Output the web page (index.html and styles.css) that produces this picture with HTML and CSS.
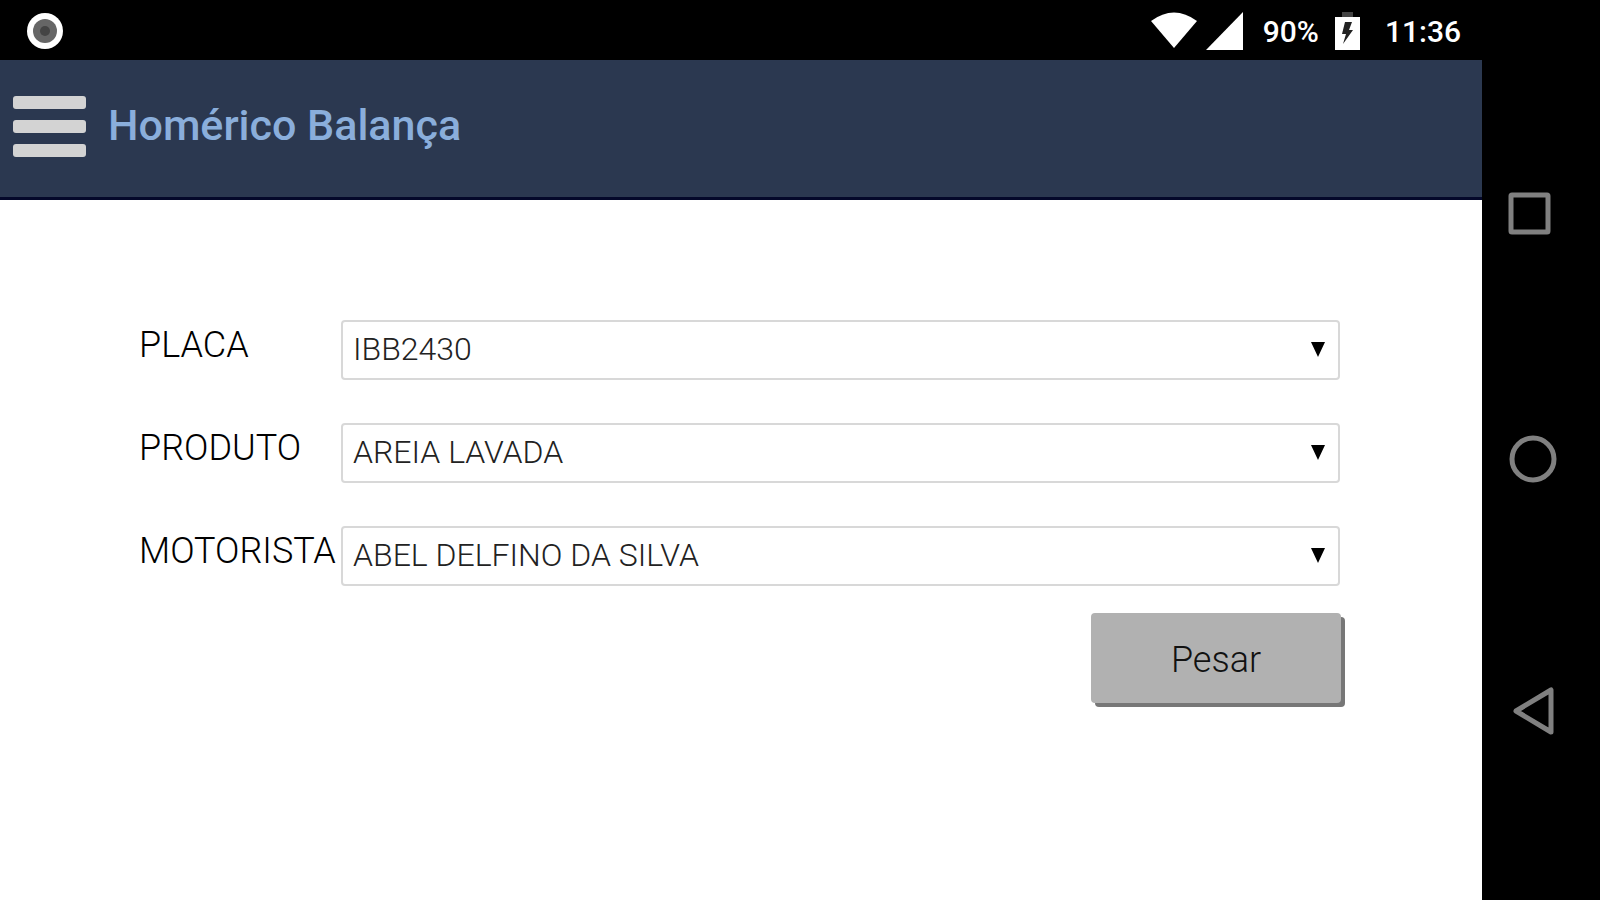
FILE: index.html
```html
<!DOCTYPE html>
<html lang="pt-BR">
<head>
<meta charset="utf-8">
<meta name="viewport" content="width=device-width, initial-scale=1">
<title>Homérico Balança</title>
<link rel="stylesheet" href="styles.css">
</head>
<body>
<div class="screen">
  <div class="status-bar">
    <svg class="record" width="38" height="38" viewBox="0 0 38 38" aria-hidden="true">
      <circle cx="19" cy="19" r="18" fill="#fff"/>
      <circle cx="19" cy="19" r="12" fill="#666"/>
      <circle cx="19" cy="19" r="5" fill="#444"/>
    </svg>
    <div class="indicators">
      <svg width="46" height="38" viewBox="0 0 46 38" aria-hidden="true">
        <path d="M0 9Q23-8 46 9L23 36Z" fill="#fff"/>
      </svg>
      <svg class="signal" width="37" height="38" viewBox="0 0 37 38" aria-hidden="true">
        <path d="M37 0V38H0Z" fill="#fff"/>
      </svg>
      <span class="level">90%</span>
      <svg class="battery" width="25" height="38" viewBox="0 0 25 38" aria-hidden="true">
        <path d="M7 0H18V5H7Z" fill="#444"/>
        <path d="M0 5H25V38H0Z" fill="#fff"/>
        <path d="M10 10H17L14 18H18L8 32L11 22H7Z" fill="#222"/>
      </svg>
      <time class="clock">11:36</time>
    </div>
  </div>
  <nav class="system-nav" aria-label="Sistema">
    <button class="nav-key" type="button" aria-label="Recentes">
      <svg width="48" height="48" viewBox="0 0 48 48"><rect x="2" y="5" width="37" height="37" rx="1"/></svg>
    </button>
    <button class="nav-key" type="button" aria-label="Início">
      <svg width="48" height="48" viewBox="0 0 48 48"><circle cx="24" cy="20" r="21"/></svg>
    </button>
    <button class="nav-key" type="button" aria-label="Voltar">
      <svg width="48" height="48" viewBox="0 0 48 48"><path d="M7 24L42 3V45Z"/></svg>
    </button>
  </nav>
  <header class="app-bar">
    <button class="menu" type="button" aria-label="Menu">
      <span class="menu-line"></span><span class="menu-line"></span><span class="menu-line"></span>
    </button>
    <h1 class="title">Homérico Balança</h1>
  </header>
  <main class="content">
    <form class="form">
      <div class="field">
        <label class="label" for="placa">PLACA</label>
        <div class="select-box">
          <select class="select" id="placa"><option>IBB2430</option></select>
          <svg class="arrow" width="14" height="15" viewBox="0 0 14 15" aria-hidden="true"><path d="M0 0H14L7 15Z"/></svg>
        </div>
      </div>
      <div class="field">
        <label class="label" for="produto">PRODUTO</label>
        <div class="select-box">
          <select class="select" id="produto"><option>AREIA LAVADA</option></select>
          <svg class="arrow" width="14" height="15" viewBox="0 0 14 15" aria-hidden="true"><path d="M0 0H14L7 15Z"/></svg>
        </div>
      </div>
      <div class="field">
        <label class="label" for="motorista">MOTORISTA</label>
        <div class="select-box">
          <select class="select" id="motorista"><option>ABEL DELFINO DA SILVA</option></select>
          <svg class="arrow" width="14" height="15" viewBox="0 0 14 15" aria-hidden="true"><path d="M0 0H14L7 15Z"/></svg>
        </div>
      </div>
      <button class="submit" type="button">Pesar</button>
    </form>
  </main>
</div>
</body>
</html>
```
FILE: styles.css
```css
* {
  box-sizing: border-box;
}

body {
  margin: 0;
  background: #000;
  font-family: Roboto, "Liberation Sans", sans-serif;
}

button {
  padding: 0;
  border: 0;
  font-family: inherit;
  cursor: pointer;
}

svg {
  display: block;
  overflow: visible;
}

.screen {
  display: grid;
  grid-template-columns: 1fr 118px;
  grid-template-rows: 60px 140px 1fr;
  min-height: 100vh;
}

.status-bar {
  display: flex;
  align-items: center;
  justify-content: space-between;
  padding: 2px 21px 0 26px;
  color: #fff;
  font-size: 30px;
  font-weight: 500;
}

.indicators {
  display: flex;
  align-items: center;
}

.signal {
  margin: 0 20px 0 9px;
}

.battery {
  margin: 0 25px 0 16px;
}

.system-nav {
  grid-column: 2;
  grid-row: 1 / 4;
  display: flex;
  flex-direction: column;
  justify-content: space-between;
  align-items: flex-start;
  padding: 190px 0 165px 27px;
}

.nav-key {
  background: none;
}

.nav-key svg {
  fill: none;
  stroke: #808080;
  stroke-width: 5px;
  stroke-linejoin: round;
}

.app-bar {
  grid-column: 1;
  display: flex;
  align-items: center;
  gap: 22px;
  padding: 0 13px 4px;
  border-bottom: 3px solid #04082a;
  background: #2b3850;
}

.menu {
  display: flex;
  flex-direction: column;
  gap: 11px;
  width: 73px;
  background: none;
}

.menu-line {
  height: 13px;
  border-radius: 3px;
  background: #d3d3d3;
}

.title {
  margin: 0;
  padding-bottom: 4px;
  color: #8aaedb;
  font-size: 43px;
  font-weight: 500;
}

.content {
  grid-column: 1;
  padding: 120px 142px 40px 139px;
  background: #fff;
}

.form {
  display: flex;
  flex-direction: column;
  gap: 43px;
}

.field {
  display: grid;
  grid-template-columns: 202px 1fr;
}

.label {
  font-size: 36px;
  font-weight: 300;
  line-height: 50px;
}

.select-box {
  position: relative;
}

.select {
  appearance: none;
  display: block;
  width: 100%;
  height: 60px;
  padding: 0 40px 2px 10px;
  border: 2px solid #d8d8d8;
  border-radius: 4px;
  background: #fff;
  color: #222;
  font-family: inherit;
  font-size: 32px;
  font-weight: 300;
}

.arrow {
  position: absolute;
  top: 22px;
  right: 15px;
  pointer-events: none;
}

.submit {
  align-self: flex-end;
  width: 250px;
  height: 90px;
  margin: -16px -1px 0 0;
  padding-top: 4px;
  border-radius: 4px;
  background: #b1b1b1;
  box-shadow: 4px 4px 0 #777;
  color: #111;
  font-size: 36px;
  font-weight: 300;
}
```
